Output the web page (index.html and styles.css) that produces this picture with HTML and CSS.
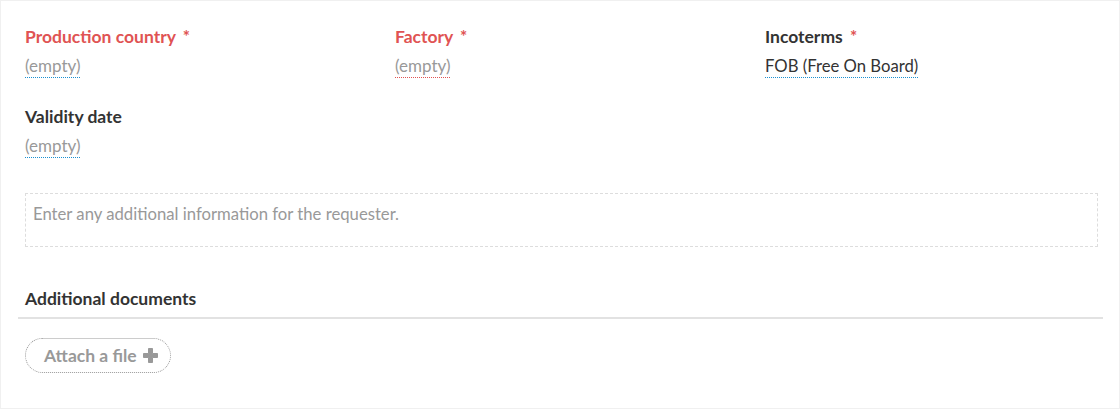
FILE: index.html
```html
<!DOCTYPE html>
<html>
<head>
<meta charset="utf-8">
<link rel="stylesheet" href="styles.css">
</head>
<body>
<div class="panel">
  <div class="fields">
    <div class="field">
      <div class="label error">Production country <span class="req">*</span></div>
      <div class="value"><span class="editable empty">(empty)</span></div>
    </div>
    <div class="field">
      <div class="label error">Factory <span class="req">*</span></div>
      <div class="value"><span class="editable empty invalid">(empty)</span></div>
    </div>
    <div class="field">
      <div class="label">Incoterms <span class="req">*</span></div>
      <div class="value"><span class="editable">FOB (Free On Board)</span></div>
    </div>
    <div class="field">
      <div class="label">Validity date</div>
      <div class="value"><span class="editable empty">(empty)</span></div>
    </div>
  </div>
  <div class="notes">Enter any additional information for the requester.</div>
  <div class="docs">
    <div class="docs-title">Additional documents</div>
    <div class="docs-rule"></div>
    <button class="attach">Attach a file
      <svg width="17" height="17" viewBox="0 0 17 17"><path d="M6.5 1.5h4v5h5v4h-5v5h-4v-5h-5v-4h5z" fill="#999" stroke="#999" stroke-width="1" stroke-linejoin="round"/></svg>
    </button>
  </div>
</div>
</body>
</html>
```
FILE: styles.css
```css
* { box-sizing: border-box; }
html, body { margin: 0; padding: 0; background: #fff; }
body { font-family: Lato, "Liberation Sans", sans-serif; font-size: 16.7px; color: #333; }
.panel {
  width: 1120px; height: 409px;
  border: 1px solid #f0f0f0;
  padding: 0 16px 0 17px;
}
.fields {
  display: grid;
  grid-template-columns: 370px 370px 330px;
  row-gap: 29px;
  padding: 26px 0 0 7px;
}
.label { font-weight: 700; font-size: 17.5px; line-height: 20px; color: #333; }
.label.error { color: #e05353; }
.req { color: #e05353; margin-left: 3px; font-size: 17px; }
.value { margin-top: 9px; line-height: 20px; height: 22px; }
.editable { border-bottom: 1px dotted #1a8fd0; padding-bottom: 1px; color: #333; }
.editable.empty { color: #999; font-size: 17px; }
.editable.invalid { border-bottom-color: #e05353; }
.notes {
  margin: 35px 5px 0 7px;
  height: 54px;
  border: 1px dashed #ddd;
  padding: 10px 7px;
  color: #999;
  line-height: 20px;
}
.docs { margin-top: 42px; }
.docs-title { font-weight: 700; font-size: 17.5px; line-height: 20px; padding-left: 7px; }
.docs-rule { height: 2px; background: #e2e2e2; margin-top: 8px; }
.attach {
  margin: 19px 0 0 7px;
  height: 35px;
  padding: 0 11px 0 18px;
  border: 1px dotted #999;
  border-radius: 18px;
  background: #fff;
  font-family: inherit;
  font-size: 17.5px;
  font-weight: 700;
  color: #999;
  display: inline-flex;
  align-items: center;
  gap: 5px;
}
.attach svg { display: block; }
```
